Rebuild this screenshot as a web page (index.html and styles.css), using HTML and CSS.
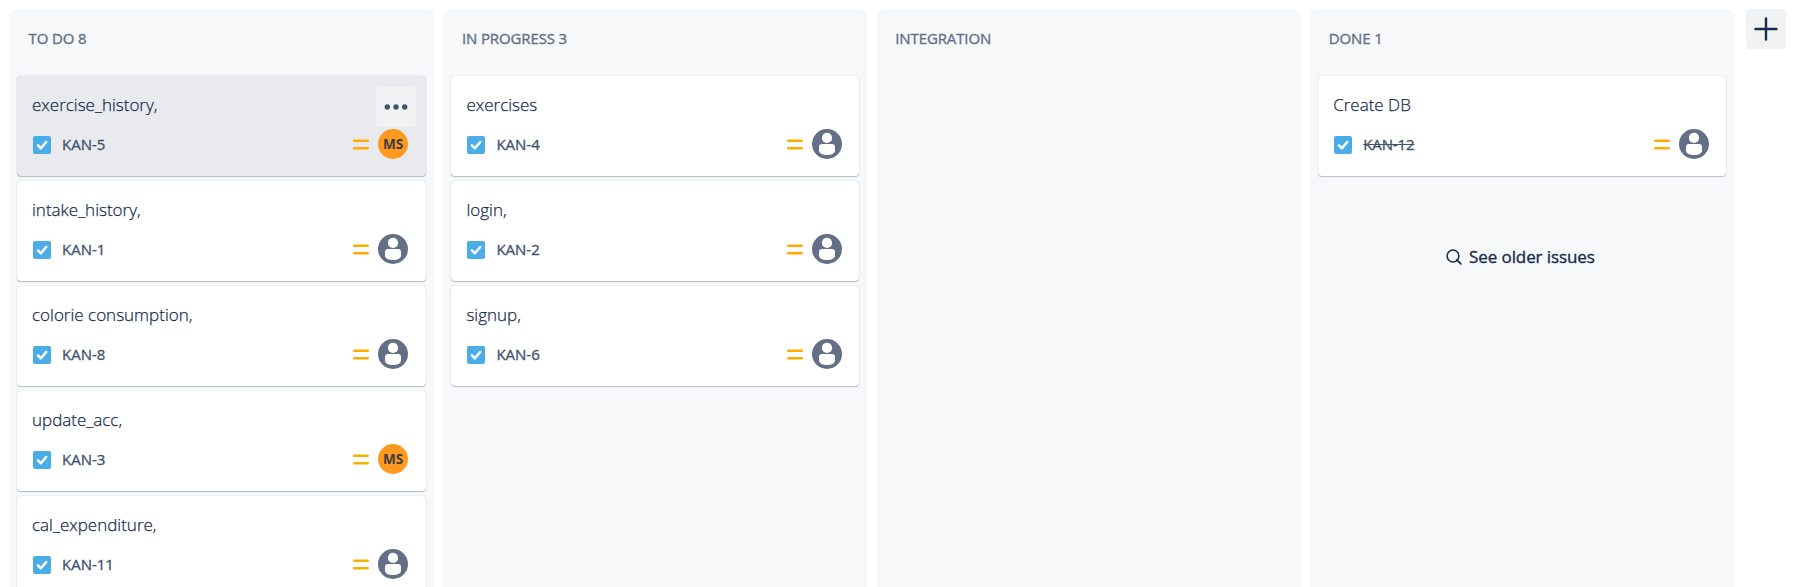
FILE: index.html
```
<!DOCTYPE html>
<html lang="en">
<head>
<meta charset="utf-8">
<title>Board</title>
<link rel="stylesheet" href="styles.css">
</head>
<body>
<svg class="defs" width="0" height="0">
  <symbol id="task" viewBox="0 0 18 18"><rect width="18" height="18" rx="2" fill="#4bade8"/><path d="M5 9.4l2.900 2.900L13.200 6" fill="none" stroke="#fff" stroke-width="2.500" stroke-linecap="round" stroke-linejoin="round"/></symbol>
  <symbol id="medium" viewBox="0 0 16 11"><path d="M1.200 1.800h13.600M1.200 9.200h13.600" fill="none" stroke="#ffab00" stroke-width="2.400" stroke-linecap="round"/></symbol>
  <symbol id="person" viewBox="0 0 30 30"><circle cx="15" cy="15" r="15" fill="#626f86"/><circle cx="15" cy="8.900" r="5.100" fill="#fff"/><path d="M7 18.100a3 3 0 0 1 3-3h10a3 3 0 0 1 3 3v3.600c0 2.600-4 4.400-8 4.400s-8-1.800-8-4.400z" fill="#fff"/></symbol>
</svg>
<main class="board">
  <section class="column column-first">
    <h2 class="heading">TO DO 8</h2>
    <div class="cards">
      <article class="card card-active">
        <p class="title">exercise_history,</p>
        <div class="meta"><svg class="task"><use href="#task"/></svg><span class="key">KAN-5</span><svg class="medium"><use href="#medium"/></svg><span class="avatar initials">MS</span></div>
        <button class="more" aria-label="More"><svg width="24" height="6" viewBox="0 0 24 6"><g fill="#44546f"><circle cx="3.300" cy="3" r="2.700"/><circle cx="12" cy="3" r="2.700"/><circle cx="20.700" cy="3" r="2.700"/></g></svg></button>
      </article>
      <article class="card">
        <p class="title">intake_history,</p>
        <div class="meta"><svg class="task"><use href="#task"/></svg><span class="key">KAN-1</span><svg class="medium"><use href="#medium"/></svg><svg class="avatar"><use href="#person"/></svg></div>
      </article>
      <article class="card">
        <p class="title">colorie consumption,</p>
        <div class="meta"><svg class="task"><use href="#task"/></svg><span class="key">KAN-8</span><svg class="medium"><use href="#medium"/></svg><svg class="avatar"><use href="#person"/></svg></div>
      </article>
      <article class="card">
        <p class="title">update_acc,</p>
        <div class="meta"><svg class="task"><use href="#task"/></svg><span class="key">KAN-3</span><svg class="medium"><use href="#medium"/></svg><span class="avatar initials">MS</span></div>
      </article>
      <article class="card">
        <p class="title">cal_expenditure,</p>
        <div class="meta"><svg class="task"><use href="#task"/></svg><span class="key">KAN-11</span><svg class="medium"><use href="#medium"/></svg><svg class="avatar"><use href="#person"/></svg></div>
      </article>
    </div>
  </section>
  <section class="column">
    <h2 class="heading">IN PROGRESS 3</h2>
    <div class="cards">
      <article class="card">
        <p class="title">exercises</p>
        <div class="meta"><svg class="task"><use href="#task"/></svg><span class="key">KAN-4</span><svg class="medium"><use href="#medium"/></svg><svg class="avatar"><use href="#person"/></svg></div>
      </article>
      <article class="card">
        <p class="title">login,</p>
        <div class="meta"><svg class="task"><use href="#task"/></svg><span class="key">KAN-2</span><svg class="medium"><use href="#medium"/></svg><svg class="avatar"><use href="#person"/></svg></div>
      </article>
      <article class="card">
        <p class="title">signup,</p>
        <div class="meta"><svg class="task"><use href="#task"/></svg><span class="key">KAN-6</span><svg class="medium"><use href="#medium"/></svg><svg class="avatar"><use href="#person"/></svg></div>
      </article>
    </div>
  </section>
  <section class="column">
    <h2 class="heading">INTEGRATION</h2>
  </section>
  <section class="column">
    <h2 class="heading">DONE 1</h2>
    <div class="cards">
      <article class="card">
        <p class="title">Create DB</p>
        <div class="meta"><svg class="task"><use href="#task"/></svg><span class="key done">KAN-12</span><svg class="medium"><use href="#medium"/></svg><svg class="avatar"><use href="#person"/></svg></div>
      </article>
    </div>
    <button class="older"><svg width="16" height="16" viewBox="0 0 16 16"><path d="M10.800 10.800l4 4" stroke="#172b4d" stroke-width="1.800" stroke-linecap="round"/><circle cx="7" cy="7" r="5.900" fill="none" stroke="#172b4d" stroke-width="1.500"/></svg><span>See older issues</span></button>
  </section>
  <button class="add" aria-label="Add column"><svg width="24" height="24" viewBox="0 0 24 24"><path d="M12 1.500v21M1.500 12h21" stroke="#172b4d" stroke-width="2.400" stroke-linecap="round"/></svg></button>
</main>
</body>
</html>
```
FILE: styles.css
```
* { box-sizing: border-box; }
html, body { margin: 0; height: 100%; overflow: hidden; background: #fff; }
body { font-family: "Open Sans", "Noto Sans", sans-serif; color: #172b4d; }
button { border: 0; padding: 0; font: inherit; color: inherit; }
.defs { display: block; height: 0; }
.board { display: flex; gap: 9.4px; height: 587px; padding: 9px 0 0 10px; }
.column { flex: 0 0 424px; height: 600px; border-radius: 8px 8px 0 0; background: #f7f8f9; padding: 0 8px 0 7.500px; }
.column-first { padding: 0 7.500px 0 6.500px; }
.heading { margin: 0; height: 67px; padding: 17px 0 0 11px; font-size: 15px; line-height: 24px; font-weight: 400; color: #626f86; letter-spacing: -0.120px; -webkit-text-stroke: 0.350px; white-space: nowrap; }
.column-first .heading { padding-left: 12px; }
.cards { display: flex; flex-direction: column; gap: 5px; }
.column-first .cards { margin-right: 0.500px; }
.card { position: relative; flex: none; height: 100px; border-radius: 4px; background: #fff; padding: 17px 17.500px 0 15.500px; box-shadow: 0 1px 1px rgba(9,30,66,.25), 0 0 1px rgba(9,30,66,.31); }
.column-first .card { padding-right: 18px; }
.card-active { background: #e9eaee; }
.title { margin: 0; height: 24px; font-size: 17px; line-height: 24px; font-weight: 300; letter-spacing: 0; -webkit-text-stroke: 0.250px; white-space: nowrap; }
.meta { display: flex; align-items: center; height: 30px; margin-top: 12px; }
.task { width: 18px; height: 18px; margin: 2px 11px 0 1px; }
.key { margin: -1px auto 0 0; font-size: 15px; line-height: 20px; font-weight: 400; color: #44546f; letter-spacing: 0; -webkit-text-stroke: 0.350px; }
.done { text-decoration: line-through; letter-spacing: -0.100px; }
.medium { width: 16px; height: 11px; margin: 1px 8.500px 0 0; }
.avatar { width: 30px; height: 30px; }
.column-first .medium { margin-right: 9px; }
.initials { display: flex; align-items: center; justify-content: center; border-radius: 50%; background: #ff991f; color: #3b3d44; font-size: 13.500px; font-weight: 700; letter-spacing: -0.200px; }
.more { position: absolute; right: 10px; top: 10.500px; width: 40px; height: 40px; display: flex; align-items: center; justify-content: center; border-radius: 4px; background: #f1f2f4; }
.older { display: flex; align-items: center; justify-content: center; gap: 7px; width: 100%; height: 40px; margin-top: 60.500px; padding-right: 3px; background: transparent; font-size: 17px; font-weight: 400; letter-spacing: -0.100px; -webkit-text-stroke: 0.350px; }
.add { flex: none; width: 40px; height: 40px; margin-left: 2px; display: flex; align-items: center; justify-content: center; border-radius: 4px; background: #f1f2f4; }
```
